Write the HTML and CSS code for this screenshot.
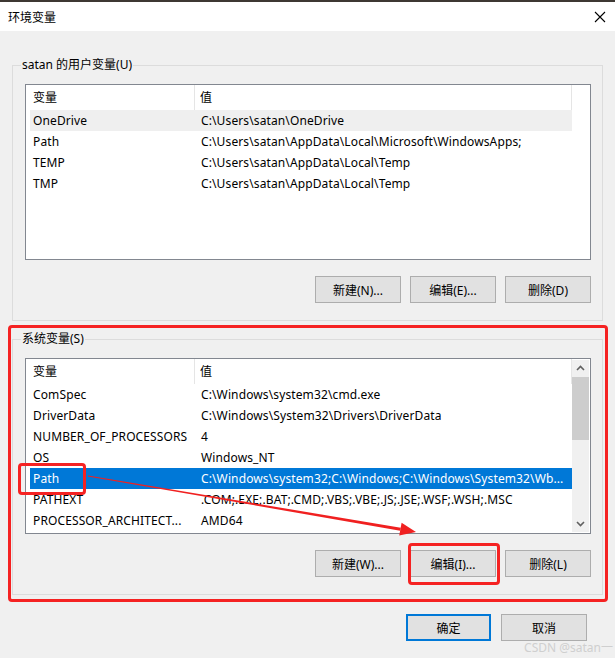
FILE: index.html
```html
<!DOCTYPE html>
<html lang="zh-CN">
<head>
    <meta charset="UTF-8">
    <title>环境变量</title>
    <link rel="stylesheet" href="styles.css">
</head>
<body>
    <div class="strip"></div>
    <div class="window">
        <div class="titlebar">
            <span class="title">环境变量</span>
            <svg class="close" width="12" height="12" viewBox="0 0 12 12">
                <path d="M1 1L11 11M11 1L1 11" stroke="#000" stroke-width="1.1" fill="none"/>
            </svg>
        </div>

        <div class="content">
            <fieldset class="group">
                <legend>satan 的用户变量(U)</legend>
                <div class="list">
                    <div class="list-main">
                        <div class="list-head">
                            <div class="col-var">变量</div>
                            <div class="col-val">值</div>
                        </div>
                        <div class="row hover">
                            <div class="col-var">OneDrive</div>
                            <div class="col-val">C:\Users\satan\OneDrive</div>
                        </div>
                        <div class="row">
                            <div class="col-var">Path</div>
                            <div class="col-val">C:\Users\satan\AppData\Local\Microsoft\WindowsApps;</div>
                        </div>
                        <div class="row">
                            <div class="col-var">TEMP</div>
                            <div class="col-val">C:\Users\satan\AppData\Local\Temp</div>
                        </div>
                        <div class="row">
                            <div class="col-var">TMP</div>
                            <div class="col-val">C:\Users\satan\AppData\Local\Temp</div>
                        </div>
                    </div>
                    <div class="scroll-slot"></div>
                </div>
                <div class="btn-row">
                    <button class="btn">新建(N)...</button>
                    <button class="btn">编辑(E)...</button>
                    <button class="btn">删除(D)</button>
                </div>
            </fieldset>

            <fieldset class="group sys-group">
                <legend>系统变量(S)</legend>
                <div class="list">
                    <div class="list-main">
                        <div class="list-head">
                            <div class="col-var">变量</div>
                            <div class="col-val">值</div>
                        </div>
                        <div class="row">
                            <div class="col-var">ComSpec</div>
                            <div class="col-val">C:\Windows\system32\cmd.exe</div>
                        </div>
                        <div class="row">
                            <div class="col-var">DriverData</div>
                            <div class="col-val">C:\Windows\System32\Drivers\DriverData</div>
                        </div>
                        <div class="row">
                            <div class="col-var">NUMBER_OF_PROCESSORS</div>
                            <div class="col-val">4</div>
                        </div>
                        <div class="row">
                            <div class="col-var">OS</div>
                            <div class="col-val">Windows_NT</div>
                        </div>
                        <div class="row selected">
                            <div class="col-var">Path</div>
                            <div class="col-val">C:\Windows\system32;C:\Windows;C:\Windows\System32\Wb...</div>
                        </div>
                        <div class="row">
                            <div class="col-var">PATHEXT</div>
                            <div class="col-val">.COM;.EXE;.BAT;.CMD;.VBS;.VBE;.JS;.JSE;.WSF;.WSH;.MSC</div>
                        </div>
                        <div class="row">
                            <div class="col-var">PROCESSOR_ARCHITECT...</div>
                            <div class="col-val">AMD64</div>
                        </div>
                    </div>
                    <div class="scrollbar">
                        <svg class="arrow-btn" width="17" height="17" viewBox="0 0 17 17">
                            <path d="M5 10L8.5 6.5L12 10" stroke="#606060" stroke-width="1.6" fill="none"/>
                        </svg>
                        <div class="thumb"></div>
                        <div class="track"></div>
                        <svg class="arrow-btn" width="17" height="17" viewBox="0 0 17 17">
                            <path d="M5 7L8.5 10.5L12 7" stroke="#606060" stroke-width="1.6" fill="none"/>
                        </svg>
                    </div>
                </div>
                <div class="btn-row">
                    <button class="btn">新建(W)...</button>
                    <button class="btn">编辑(I)...</button>
                    <button class="btn">删除(L)</button>
                </div>
            </fieldset>

            <div class="footer">
                <button class="btn btn-default">确定</button>
                <button class="btn">取消</button>
            </div>
        </div>

        <!-- 标注 -->
        <div class="mark mark-group"></div>
        <div class="mark mark-path"></div>
        <div class="mark mark-edit"></div>
        <svg class="pointer" width="615" height="658" viewBox="0 0 615 658">
            <polygon points="88,475.6 88,476.4 400.2,530.7 400.8,527.7" fill="#f02020"/>
            <polygon points="416,532 399.2,535.6 401.6,522.8" fill="#f02020"/>
        </svg>
        <div class="watermark">CSDN @satan一</div>
    </div>
</body>
</html>
```

FILE: styles.css
```css
body {
    margin: 0;
    background: #f0f0f0;
    font-family: "Noto Sans", "Noto Sans CJK SC", sans-serif;
    font-size: 12px;
    color: #000;
}
.strip {
    height: 2px;
    background: #3e3833;
}
.window {
    position: relative;
    height: 656px;
    overflow: hidden;
}
.titlebar {
    height: 29px;
    background: #fff;
    display: flex;
    align-items: center;
    justify-content: space-between;
    padding: 0 9px 0 8px;
}
.title {
    font-size: 12px;
}
.content {
    padding: 27px 12px 0 12px;
}
.group {
    margin: 0;
    padding: 12px 11px 17px 12px;
    border: 1px solid #dcdcdc;
    min-width: 0;
}
.group legend {
    margin-left: -4px;
    padding: 0 1px;
    line-height: 14px;
}
.sys-group {
    margin-top: 11px;
}
.list {
    display: flex;
    height: 174px;
    border: 1px solid #828790;
    background: #fff;
}
.list-main {
    flex: 1;
    min-width: 0;
}
.scroll-slot {
    width: 18px;
}
.list-head {
    display: grid;
    grid-template-columns: 169px 1fr;
    height: 25px;
    line-height: 25px;
    border-right: 1px solid #e5e5e5;
}
.list-head .col-var {
    border-right: 1px solid #e5e5e5;
    padding-left: 7px;
}
.col-var,
.col-val {
    white-space: nowrap;
    overflow: hidden;
}
.col-val {
    padding-left: 5px;
}
.row {
    display: grid;
    grid-template-columns: 165px 1fr;
    height: 21px;
    line-height: 21px;
    margin-left: 4px;
    letter-spacing: 0.12px;
}
.row .col-var {
    padding-left: 3px;
}
.row .col-val {
    padding-left: 6px;
}
.row.hover {
    background: #efefef;
}
.row.selected {
    background: #0078d7;
    color: #fff;
}
.scrollbar {
    width: 17px;
    background: #f0f0f0;
    display: flex;
    flex-direction: column;
    margin: 1px 1px 1px 0;
}
.arrow-btn {
    display: block;
}
.thumb {
    height: 63px;
    background: #cdcdcd;
}
.track {
    flex: 1;
}
.btn-row {
    display: flex;
    justify-content: flex-end;
    gap: 9px;
    margin-top: 16px;
}
.btn {
    width: 86px;
    height: 27px;
    padding: 0;
    background: #e1e1e1;
    border: 1px solid #adadad;
    font-family: inherit;
    font-size: 12px;
    color: #000;
}
.footer {
    display: flex;
    justify-content: flex-end;
    gap: 10px;
    margin-top: 19px;
    padding-right: 16px;
}
.btn-default {
    width: 85px;
    border: 2px solid #0078d7;
}
.mark {
    position: absolute;
    border: 3px solid #f52222;
    border-radius: 4px;
}
.mark-group {
    left: 8px;
    top: 323px;
    width: 594px;
    height: 271px;
}
.mark-path {
    left: 18px;
    top: 461px;
    width: 62px;
    height: 26px;
}
.mark-edit {
    left: 408px;
    top: 541px;
    width: 86px;
    height: 36px;
}
.pointer {
    position: absolute;
    left: 0;
    top: -2px;
}
.watermark {
    position: absolute;
    right: 2px;
    bottom: 2px;
    font-size: 12px;
    color: #cfcfcf;
    white-space: nowrap;
}
```
